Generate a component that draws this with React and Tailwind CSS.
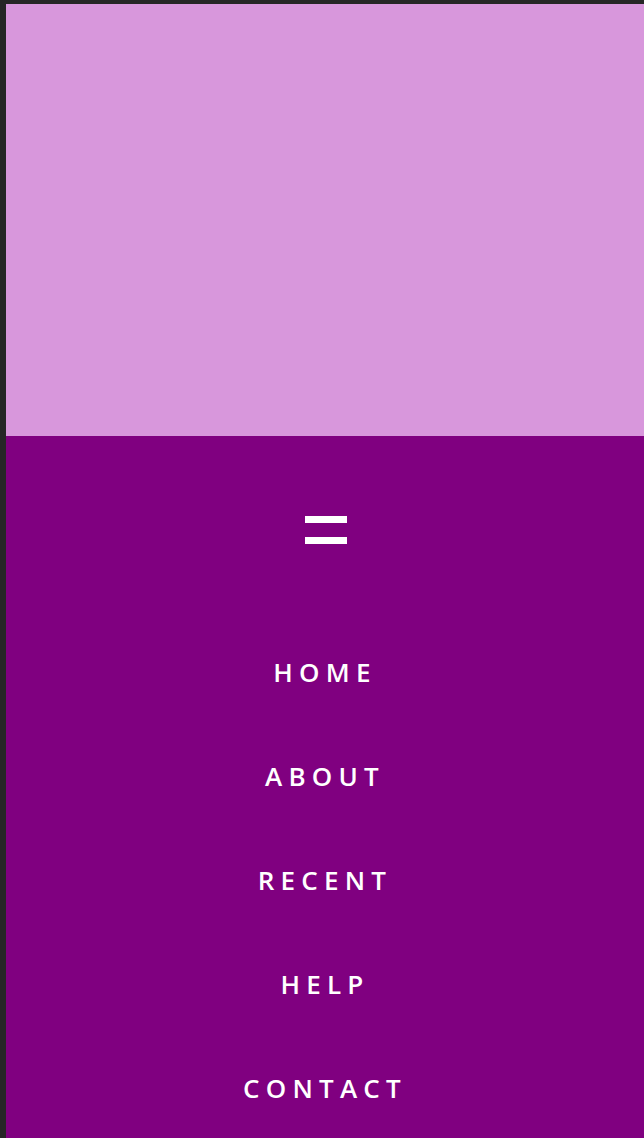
const links = ["HOME", "ABOUT", "RECENT", "HELP", "CONTACT"];

const App = () => {
  return (
    <div className="min-h-screen bg-[#262626] pl-[6px] pt-[4px] font-['Open_Sans',sans-serif]">
      <div className="h-[432px] bg-[#d897dc]" />

      <nav className="bg-[#800080] pt-[80px] pb-[20px]">
        <div className="flex flex-col items-center gap-[14px] pl-[2px]">
          <span className="block h-[7px] w-[42px] bg-white" />
          <span className="block h-[7px] w-[42px] bg-white" />
        </div>

        <ul className="mt-[76px] flex flex-col">
          {links.map((link) => (
            <li key={link} className="flex h-[104px] items-center justify-center">
              <a href="#" className="text-[26px] font-semibold tracking-[0.24em] text-white">
                {link}
              </a>
            </li>
          ))}
        </ul>
      </nav>
    </div>
  );
};

export default App;
